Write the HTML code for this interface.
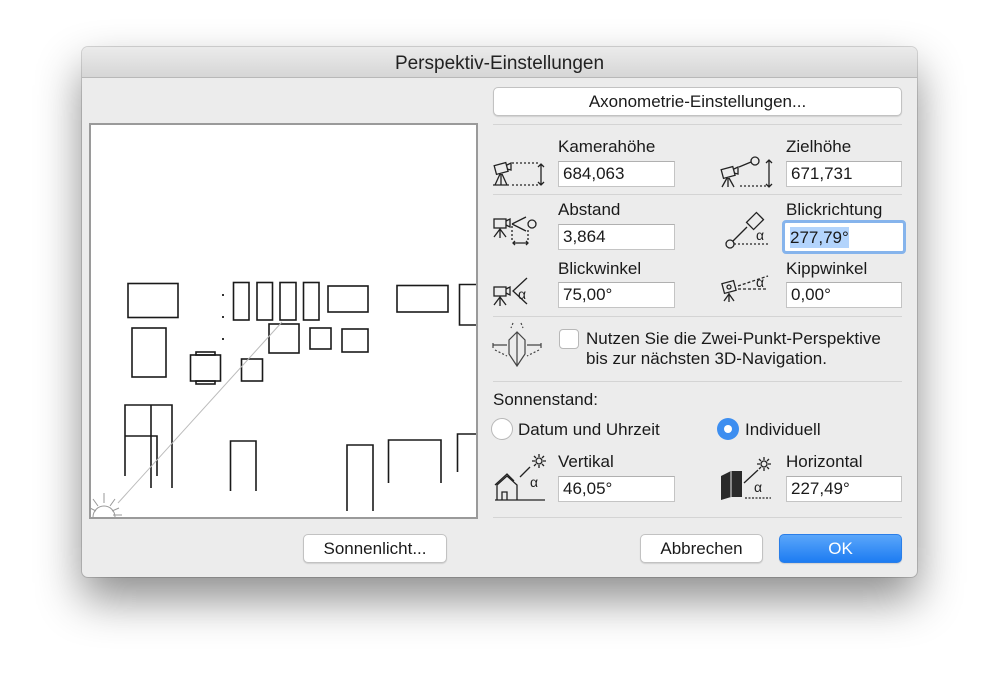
<!DOCTYPE html>
<html><head><meta charset="utf-8"><style>
*{margin:0;padding:0;box-sizing:border-box}
body{width:999px;height:694px;background:#fff;position:relative;overflow:hidden;font-family:"Liberation Sans",sans-serif;font-size:17px;color:#1a1a1a}
.win{position:absolute;left:82px;top:47px;width:835px;height:530px;background:#ececec;border-radius:6px;box-shadow:0 22px 45px rgba(0,0,0,.45),0 0 0 1px rgba(0,0,0,.15)}
.title{position:absolute;width:835px;height:31px;background:linear-gradient(#ebebeb,#d6d6d6);border-bottom:1px solid #b8b8b8;border-radius:6px 6px 0 0;text-align:center;font-size:19px;line-height:33px;color:#222}
.a{position:absolute}
.lbl{position:absolute;font-size:17px;line-height:19px;white-space:nowrap}
.inp{position:absolute;height:26px;background:#fff;border:1px solid #c4c4c4;border-top-color:#b0b0b0;font-size:17px;line-height:24px;padding-left:4px}
.btn{position:absolute;height:29px;background:#fff;border:1px solid #c2c2c2;border-radius:5px;box-shadow:0 1px 1px rgba(0,0,0,.12);text-align:center;font-size:17px;line-height:27px}
.sep{position:absolute;left:493px;width:409px;height:1px;background:#d4d4d4}
</style></head><body>
<div class="win"></div>
<div class="a title" style="left:82px;top:47px">Perspektiv-Einstellungen</div>

<svg class="a" style="left:89px;top:123px" width="389" height="396" viewBox="89 123 389 396">
<rect x="90" y="124" width="387" height="394" fill="#fff" stroke="#9a9a9a" stroke-width="2"/>
<g fill="none" stroke="#1a1a1a" stroke-width="1.6">
<rect x="128" y="283.5" width="50" height="34"/>
<rect x="233.5" y="282.5" width="15.5" height="37.5"/>
<rect x="257" y="282.5" width="15.5" height="37.5"/>
<rect x="280" y="282.5" width="16" height="37.5"/>
<rect x="303.5" y="282.5" width="15.5" height="37.5"/>
<rect x="328" y="286" width="40" height="26"/>
<rect x="397" y="285.5" width="51" height="26.5"/>
<path d="M476 284.5H459.5V325H476"/>
<rect x="132" y="328" width="34" height="49"/>
<rect x="190.5" y="355" width="30" height="26"/>
<rect x="196" y="352" width="19" height="3"/><rect x="196" y="381" width="19" height="3"/>
<rect x="241.5" y="359" width="21" height="22"/>
<rect x="269" y="324" width="30" height="29"/>
<rect x="310" y="328" width="21" height="21"/>
<rect x="342" y="329" width="26" height="23"/>
<path d="M125 476V405H172V488M151 405V488M125 436H157V476"/>
<path d="M230.5 491V441H256V491"/>
<path d="M347 511V445H373V511"/>
<path d="M388.5 483V440H441V483"/>
<path d="M457.5 472V434H476"/>
</g>
<g fill="#333"><rect x="222" y="294" width="2" height="2"/><rect x="222" y="316" width="2" height="2"/><rect x="222" y="338" width="2" height="2"/></g>
<line x1="118" y1="503" x2="282" y2="322" stroke="#bbb" stroke-width="1"/>
<g stroke="#999" stroke-width="1" fill="none"><path d="M93 517a11 11 0 0 1 22 0"/><path d="M104 503v-10M98 506l-5-7M110 506l5-7M96 511l-6-3M112 511l7-3M113 515h9"/></g>
</svg>

<div class="btn" style="left:493px;top:87px;width:409px">Axonometrie-Einstellungen...</div>
<div class="sep" style="top:124px"></div>

<div class="lbl" style="left:558px;top:137px">Kamerahöhe</div>
<div class="inp" style="left:558px;top:161px;width:117px">684,063</div>
<div class="lbl" style="left:786px;top:137px">Zielhöhe</div>
<div class="inp" style="left:786px;top:161px;width:116px">671,731</div>
<div class="sep" style="top:194px"></div>
<div class="lbl" style="left:558px;top:200px">Abstand</div>
<div class="inp" style="left:558px;top:224px;width:117px">3,864</div>
<div class="lbl" style="left:786px;top:200px">Blickrichtung</div>
<div class="a" style="left:782px;top:220px;width:124px;height:34px;border:3px solid #86b4ec;border-radius:4px;background:#fff"><span style="position:absolute;left:5px;top:4px;background:#b3d4fc;font-size:17px;line-height:21px">277,79°</span></div>
<div class="lbl" style="left:558px;top:259px">Blickwinkel</div>
<div class="inp" style="left:558px;top:282px;width:117px">75,00°</div>
<div class="lbl" style="left:786px;top:259px">Kippwinkel</div>
<div class="inp" style="left:786px;top:282px;width:116px">0,00°</div>
<div class="sep" style="top:316px"></div>
<div class="a" style="left:559px;top:329px;width:20px;height:20px;background:#fff;border:1px solid #b8b8b8;border-radius:4px"></div>
<div class="lbl" style="left:586px;top:329px">Nutzen Sie die Zwei-Punkt-Perspektive</div>
<div class="lbl" style="left:586px;top:349px">bis zur nächsten 3D-Navigation.</div>
<div class="sep" style="top:381px"></div>
<div class="lbl" style="left:493px;top:390px">Sonnenstand:</div>
<div class="a" style="left:491px;top:418px;width:22px;height:22px;border-radius:50%;background:#fff;border:1px solid #b8b8b8"></div>
<div class="lbl" style="left:518px;top:420px">Datum und Uhrzeit</div>
<div class="a" style="left:717px;top:418px;width:22px;height:22px;border-radius:50%;background:#3d8ef0"><div style="position:absolute;left:7px;top:7px;width:8px;height:8px;border-radius:50%;background:#fff"></div></div>
<div class="lbl" style="left:745px;top:420px">Individuell</div>
<div class="lbl" style="left:558px;top:452px">Vertikal</div>
<div class="inp" style="left:558px;top:476px;width:117px">46,05°</div>
<div class="lbl" style="left:786px;top:452px">Horizontal</div>
<div class="inp" style="left:786px;top:476px;width:116px">227,49°</div>
<div class="sep" style="top:517px"></div>

<div class="btn" style="left:303px;top:534px;width:144px">Sonnenlicht...</div>
<div class="btn" style="left:640px;top:534px;width:123px">Abbrechen</div>
<div class="btn" style="left:779px;top:534px;width:123px;background:linear-gradient(#5aa6fa,#1d7cf2);border-color:#2a7ee8;color:#fff">OK</div>

<svg class="a" style="left:488px;top:155px" width="60" height="40" viewBox="0 0 60 40"><g fill="none" stroke="#222" stroke-width="1.3"><rect x="7" y="9" width="12" height="9" transform="rotate(-15 13 13)"/><path d="M19 10l4-2v7l-4-1M12 19l-5 11M13 19v11M14 19l5 11M5 30h16"/><path d="M24 8h27M24 30h27" stroke-dasharray="2 2"/><path d="M53 9v21M50 12l3-3 3 3M50 27l3 3 3-3"/></g></svg>
<svg class="a" style="left:716px;top:155px" width="60" height="40" viewBox="0 0 60 40"><g fill="none" stroke="#222" stroke-width="1.3"><rect x="6" y="13" width="12" height="9" transform="rotate(-15 12 17)"/><path d="M18 14l4-2v7l-4-1M11 23l-5 9M12 23v9M13 23l5 9"/><path d="M23 12l12-5"/><circle cx="39" cy="6" r="4"/><path d="M24 31h27" stroke-dasharray="2 2"/><path d="M53 5v27M50 8l3-3 3 3M50 29l3 3 3-3"/></g></svg>
<svg class="a" style="left:488px;top:212px" width="60" height="42" viewBox="0 0 60 42"><g fill="none" stroke="#222" stroke-width="1.3"><rect x="6" y="7" width="12" height="9"/><path d="M18 9l4-2v8l-4-2M12 16v10M12 17l-6 8M12 17l6 8"/><path d="M24 12l14-7M24 12l14 7"/><circle cx="44" cy="12" r="4"/><path d="M24 14v14M40 18v10" stroke-dasharray="2 2"/><path d="M25 31h15M27 29l-2 2 2 2M38 29l2 2-2 2"/></g></svg>
<svg class="a" style="left:716px;top:208px" width="60" height="44" viewBox="0 0 60 44"><g fill="none" stroke="#222" stroke-width="1.3"><circle cx="14" cy="36" r="4"/><path d="M17 33l14-14"/><rect x="34" y="6" width="10" height="14" transform="rotate(45 39 13)"/><path d="M18 36h34" stroke-dasharray="2 2"/></g><text x="40" y="32" font-family="Liberation Sans" font-size="14" fill="#222">α</text></svg>
<svg class="a" style="left:488px;top:272px" width="60" height="40" viewBox="0 0 60 40"><g fill="none" stroke="#222" stroke-width="1.3"><rect x="6" y="15" width="12" height="9"/><path d="M18 17l4-2v8l-4-2M12 24v10M12 25l-6 8M12 25l6 8"/><path d="M39 6l-14 13 14 13"/></g><text x="30" y="27" font-family="Liberation Sans" font-size="14" fill="#222">α</text></svg>
<svg class="a" style="left:716px;top:272px" width="60" height="40" viewBox="0 0 60 40"><g fill="none" stroke="#222" stroke-width="1.3"><rect x="7" y="10" width="12" height="10" transform="rotate(-15 13 15)"/><circle cx="13" cy="15" r="2"/><path d="M13 21v9M13 22l-5 7M13 22l5 7"/><path d="M22 14l30-10M22 17h30" stroke-dasharray="3 2"/></g><text x="40" y="15" font-family="Liberation Sans" font-size="14" fill="#222">α</text></svg>
<svg class="a" style="left:490px;top:320px" width="60" height="50" viewBox="0 0 60 50"><g fill="none" stroke="#444" stroke-width="1.2"><path d="M27 12l-8 8v14l8 12 8-12V20zM27 12v34M3 23v5M3 25h14M51 23v5M37 25h14"/><path d="M23 3l-2 5M31 3l2 5M5 30l12 6M49 30l-12 6" stroke-dasharray="2 2"/></g></svg>
<svg class="a" style="left:492px;top:452px" width="58" height="50" viewBox="0 0 58 50"><g fill="none" stroke="#222" stroke-width="1.3"><path d="M3 48h50M5 48V33l10-9 10 9v15M10 48v-8h5v8M22 29l-7-7-12 11M28 25l10-10"/><circle cx="47" cy="9" r="3"/><path d="M47 2v3M47 13v3M40 9h3M51 9h3M42 4l2 2M50 12l2 2M42 14l2-2M50 6l2-2"/></g><text x="38" y="35" font-family="Liberation Sans" font-size="14" fill="#222">α</text></svg>
<svg class="a" style="left:718px;top:452px" width="58" height="50" viewBox="0 0 58 50"><path d="M3 24l10-5h11v26H13l-10 3z" fill="#2a2a2a"/><path d="M13 19v26" stroke="#aaa" stroke-width="1.5"/><g fill="none" stroke="#222" stroke-width="1.3"><path d="M27 46h26" stroke-dasharray="2 1.5"/><path d="M26 31l14-13"/><circle cx="46" cy="12" r="3"/><path d="M46 5v3M46 16v3M39 12h3M50 12h3M41 7l2 2M49 15l2 2M41 17l2-2M49 9l2-2"/></g><text x="36" y="40" font-family="Liberation Sans" font-size="14" fill="#222">α</text></svg>
</body></html>
